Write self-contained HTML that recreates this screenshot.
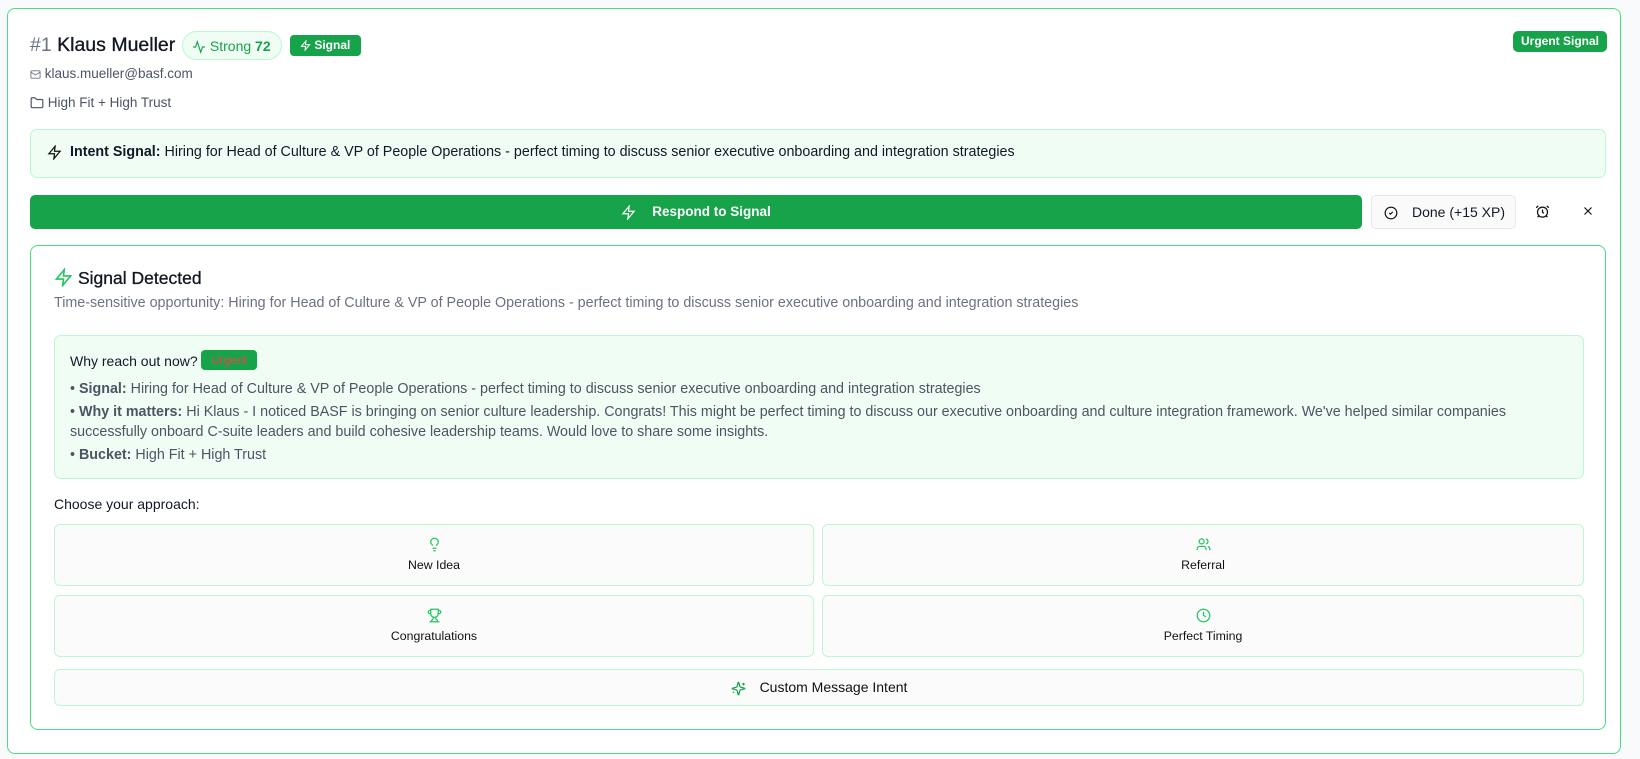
<!DOCTYPE html>
<html><head><meta charset="utf-8"><style>
*{box-sizing:border-box;margin:0;padding:0}
body{width:1640px;height:759px;background:#f8f9fa;font-family:"Liberation Sans",sans-serif;color:#111827;position:relative;overflow:hidden}
.a{position:absolute}
svg{display:inline-block;vertical-align:middle}
.card{left:7px;top:8px;width:1614px;height:746px;border:1.5px solid #4ade80;border-radius:8px;background:#fff}
.box{border-radius:7px}
.opt{position:absolute;background:#fbfbfb;border:1px solid #bbf7d0;border-radius:6px;text-align:center;font-size:12.3px;color:#111}
.gr{color:#4b5563}
</style></head><body>
<div class="a card"></div>
<div class="a" style="left:30px;top:34px;font-size:19.5px;"><span style="color:#6b7280">#1</span> <span style="font-weight:500;-webkit-text-stroke:0.3px #111">Klaus Mueller</span></div>
<div class="a" style="left:182px;top:31px;width:100px;height:29px;border:1px solid #bbf7d0;background:#f0fdf4;border-radius:15px;font-size:14px;color:#16a34a;padding:6px 0 0 9px"><svg width="14" height="14" viewBox="0 0 24 24" fill="none" stroke="#16a34a" stroke-width="2"><path d="M22 12h-4l-3 9L9 3l-3 9H2"/></svg> Strong <b style="font-weight:600">72</b></div>
<div class="a" style="left:290px;top:35px;width:71px;height:21px;background:#16a34a;border-radius:4px;color:#fff;font-size:12px;padding:3px 0 0 10px;font-weight:600"><svg width="11" height="11" viewBox="0 0 24 24" fill="none" stroke="#fff" stroke-width="2.2"><path d="M13 2L3 14h9l-1 8 10-12h-9l1-8z"/></svg> Signal</div>
<div class="a" style="left:1513px;top:31px;width:94px;height:21px;background:#16a34a;border-radius:5px;color:#fff;font-size:12px;font-weight:600;text-align:center;line-height:21px">Urgent Signal</div>
<div class="a gr" style="left:30px;top:66px;font-size:13.5px"><svg width="11" height="11" viewBox="0 0 24 24" fill="none" stroke="#6b7280" stroke-width="2"><rect x="2" y="4" width="20" height="16" rx="2"/><path d="M22 7l-10 6L2 7"/></svg> klaus.mueller@basf.com</div>
<div class="a gr" style="left:30px;top:95px;font-size:13.5px"><svg width="14" height="14" viewBox="0 0 24 24" fill="none" stroke="#4b5563" stroke-width="2"><path d="M20 20a2 2 0 002-2V8a2 2 0 00-2-2h-7.9a2 2 0 01-1.7-.9l-.8-1.2A2 2 0 007.9 3H4a2 2 0 00-2 2v13a2 2 0 002 2z"/></svg> High Fit + High Trust</div>
<div class="a box" style="left:30px;top:129px;width:1576px;height:49px;background:#f0fdf4;border:1px solid #bbf7d0;font-size:14.3px;padding:14px 0 0 16px"><svg width="15" height="15" viewBox="0 0 24 24" fill="none" stroke="#111" stroke-width="2" style="margin-right:8px"><path d="M13 2L3 14h9l-1 8 10-12h-9l1-8z"/></svg><b style="font-weight:600">Intent Signal:</b> Hiring for Head of Culture &amp; VP of People Operations - perfect timing to discuss senior executive onboarding and integration strategies</div>
<div class="a" style="left:30px;top:195px;width:1332px;height:34px;background:#16a34a;border-radius:5px;color:#fff;font-size:13.5px;font-weight:600;text-align:center;line-height:34px"><svg width="15" height="15" viewBox="0 0 24 24" fill="none" stroke="#fff" stroke-width="2" style="margin-right:16px"><path d="M13 2L3 14h9l-1 8 10-12h-9l1-8z"/></svg>Respond to Signal</div>
<div class="a" style="left:1371px;top:195px;width:145px;height:34px;border:1px solid #e5e7eb;border-radius:5px;background:#fafafa;font-size:14px;line-height:32px;padding-left:12px"><svg width="14" height="14" viewBox="0 0 24 24" fill="none" stroke="#111" stroke-width="2" style="margin-right:14px"><circle cx="12" cy="12" r="10"/><path d="M9 12l2 2 4-4"/></svg>Done (+15 XP)</div>
<svg class="a" style="left:1535px;top:204px" width="15" height="15" viewBox="0 0 24 24" fill="none" stroke="#111" stroke-width="2"><circle cx="12" cy="13" r="8"/><path d="M12 9v4l2 2M5 3L2 6M22 6l-3-3M6.4 18.9L4 21M17.6 18.9L20 21"/></svg>
<svg class="a" style="left:1581px;top:204px" width="14" height="14" viewBox="0 0 24 24" fill="none" stroke="#111" stroke-width="2"><path d="M18 6L6 18M6 6l12 12"/></svg>
<div class="a" style="left:30px;top:245px;width:1576px;height:485px;border:1.5px solid #4ade80;border-radius:8px;background:#fff"></div>
<div class="a" style="left:54px;top:268px;font-size:17.5px;font-weight:500;-webkit-text-stroke:0.3px #111"><svg width="19" height="19" viewBox="0 0 24 24" fill="none" stroke="#22c55e" stroke-width="2" style="margin-right:5px;vertical-align:-3px"><path d="M13 2L3 14h9l-1 8 10-12h-9l1-8z"/></svg>Signal Detected</div>
<div class="a" style="left:54px;top:295px;font-size:14.3px;color:#6b7280">Time-sensitive opportunity: Hiring for Head of Culture &amp; VP of People Operations - perfect timing to discuss senior executive onboarding and integration strategies</div>
<div class="a box" style="left:54px;top:335px;width:1530px;height:144px;background:#f0fdf4;border:1px solid #bbf7d0"></div>
<div class="a" style="left:70px;top:353px;font-size:14px">Why reach out now?</div>
<div class="a" style="left:201px;top:350px;width:56px;height:20px;background:#16a34a;border-radius:4px;color:#ef4444;font-size:12px;text-align:center;line-height:20px">Urgent</div>
<div class="a" style="left:70px;top:379px;width:1500px;font-size:14.3px;color:#4b5563;line-height:20px">
<div style="margin-bottom:3px">• <b style="font-weight:600">Signal:</b> Hiring for Head of Culture &amp; VP of People Operations - perfect timing to discuss senior executive onboarding and integration strategies</div>
<div style="margin-bottom:3px">• <b style="font-weight:600">Why it matters:</b> Hi Klaus - I noticed BASF is bringing on senior culture leadership. Congrats! This might be perfect timing to discuss our executive onboarding and culture integration framework. We've helped similar companies successfully onboard C-suite leaders and build cohesive leadership teams. Would love to share some insights.</div>
<div>• <b style="font-weight:600">Bucket:</b> High Fit + High Trust</div></div>
<div class="a" style="left:54px;top:496px;font-size:14px">Choose your approach:</div>
<div class="opt" style="left:54px;top:524px;width:760px;height:62px;padding-top:12px"><svg width="15" height="15" viewBox="0 0 24 24" fill="none" stroke="#22c55e" stroke-width="2"><path d="M15 14c.2-1 .7-1.7 1.5-2.5A4.8 4.8 0 0018 8 6 6 0 006 8c0 1 .2 2.2 1.5 3.5.7.7 1.3 1.5 1.5 2.5M9 18h6M10 22h4"/></svg><div style="margin-top:6px">New Idea</div></div>
<div class="opt" style="left:822px;top:524px;width:762px;height:62px;padding-top:12px"><svg width="15" height="15" viewBox="0 0 24 24" fill="none" stroke="#22c55e" stroke-width="2"><path d="M16 21v-2a4 4 0 00-4-4H6a4 4 0 00-4 4v2"/><circle cx="9" cy="7" r="4"/><path d="M22 21v-2a4 4 0 00-3-3.9M16 3.1a4 4 0 010 7.8"/></svg><div style="margin-top:6px">Referral</div></div>
<div class="opt" style="left:54px;top:595px;width:760px;height:62px;padding-top:12px"><svg width="15" height="15" viewBox="0 0 24 24" fill="none" stroke="#22c55e" stroke-width="2"><path d="M6 9H4.5a2.5 2.5 0 010-5H6M18 9h1.5a2.5 2.5 0 000-5H18M4 22h16M10 14.7V17c0 .6-.5 1-1 1.2C7.9 18.8 7 20.2 7 22M14 14.7V17c0 .6.5 1 1 1.2 1.1.5 2 1.9 2 3.8M18 2H6v7a6 6 0 0012 0V2z"/></svg><div style="margin-top:6px">Congratulations</div></div>
<div class="opt" style="left:822px;top:595px;width:762px;height:62px;padding-top:12px"><svg width="15" height="15" viewBox="0 0 24 24" fill="none" stroke="#22c55e" stroke-width="2"><circle cx="12" cy="12" r="10"/><path d="M12 6v6l4 2"/></svg><div style="margin-top:6px">Perfect Timing</div></div>
<div class="opt" style="left:54px;top:669px;width:1530px;height:37px;font-size:14px;line-height:35px"><svg width="15" height="15" viewBox="0 0 24 24" fill="none" stroke="#16a34a" stroke-width="2" style="margin-right:14px"><path d="M9.9 15.5A2 2 0 008.5 14.1L2.4 12.5a.5.5 0 010-1l6.1-1.6A2 2 0 009.9 8.5l1.6-6.1a.5.5 0 011 0l1.6 6.1a2 2 0 001.4 1.4l6.1 1.6a.5.5 0 010 1l-6.1 1.6a2 2 0 00-1.4 1.4l-1.6 6.1a.5.5 0 01-1 0z"/><path d="M20 3v4M22 5h-4M4 17v2M5 18H3"/></svg>Custom Message Intent</div>
</body></html>
